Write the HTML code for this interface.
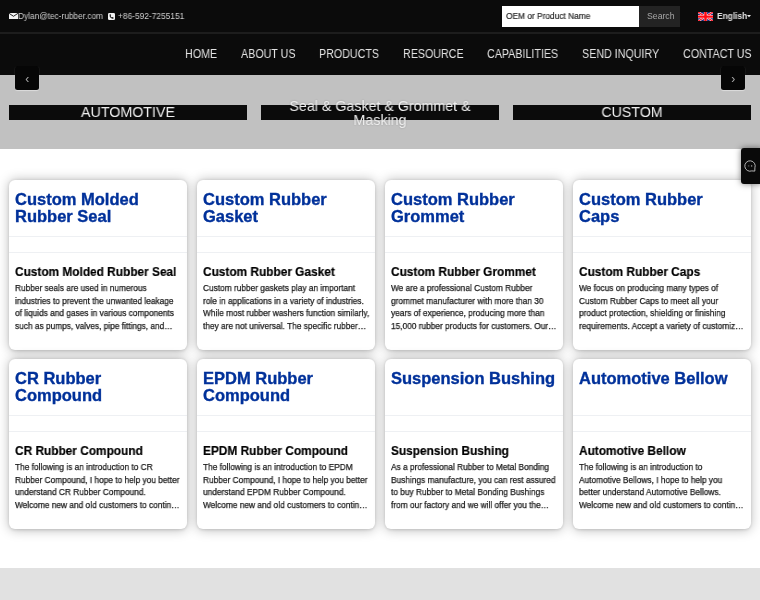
<!DOCTYPE html>
<html><head><meta charset="utf-8">
<style>
*{margin:0;padding:0;box-sizing:border-box}
html,body{width:760px;height:600px;overflow:hidden;background:#fff;font-family:"Liberation Sans",sans-serif}
.top{position:absolute;left:0;top:0;width:760px;height:32px;background:#0b0b0b}
.topline{position:absolute;left:0;top:32px;width:760px;height:2px;background:#1d1d1d}
.nav{position:absolute;left:0;top:34px;width:760px;height:41px;background:#0b0b0b}
.search{position:absolute;left:502px;top:6px;width:136.5px;height:20.5px;background:#fff}
.sbtn{position:absolute;left:638.5px;top:6px;width:41.5px;height:20.5px;background:#232323}
.tb{position:absolute;color:#d0d0d0;font-size:8.7px;white-space:nowrap;transform-origin:0 0}
.navi{position:absolute;top:46.6px;color:#e2e2e2;font-size:12.3px;white-space:nowrap;transform:scaleX(.87);transform-origin:0 0}
.banner{position:absolute;left:0;top:75px;width:760px;height:74px;background:#c1c1c1}
.arrow{position:absolute;top:66px;width:24.3px;height:24px;background:#060606;border-radius:2.5px;color:#aaa;font-size:12px;text-align:center;line-height:26px;box-shadow:0 1px 1px -.3px rgba(255,255,255,.45)}
.tab{position:absolute;top:105px;width:238px;height:15px;background:#0b0b0b}
.tabt{position:absolute;color:#eee;font-size:15px;white-space:nowrap;text-align:center;transform:scaleX(.949)}
.chat{position:absolute;left:741px;top:148px;width:22px;height:36px;background:#090909;border-radius:3px;box-shadow:0 0 6px rgba(0,0,0,.5);z-index:5}
.foot{position:absolute;left:0;top:568px;width:760px;height:32px;background:#e1e1e1}
.card{position:absolute;width:178px;height:170px;background:#fff;border-radius:6px;box-shadow:0 .5px 3px rgba(0,0,0,.12),0 .5px 12px rgba(0,0,0,.27);overflow:hidden}
.card .t{position:absolute;left:6px;top:10.5px;color:#00319a;font-weight:bold;font-size:16.5px;line-height:17px;-webkit-text-stroke:.35px #00319a}
.card .l1{position:absolute;left:0;top:56px;width:100%;height:1px;background:#eef0f3}
.card .l2{position:absolute;left:0;top:72px;width:100%;height:1px;background:#eef0f3}
.card .h{position:absolute;left:6px;top:83.5px;color:#000;font-weight:bold;font-size:13px;white-space:nowrap;-webkit-text-stroke:.2px #000;transform:scaleX(.912);transform-origin:0 0}
.card .d{position:absolute;left:6px;top:101.6px;white-space:nowrap;color:#111;font-size:9px;line-height:12.5px;-webkit-text-stroke:.25px #222;transform:scaleX(.924);transform-origin:0 0}
.tb,.navi,.tabt,.arrow,.t,.h,.d{will-change:transform}
.r2 .t,.r2 .h,.r2 .d{margin-top:.6px}
</style></head><body>
<div class="top"></div>
<div class="topline"></div>
<div class="nav"></div>
<svg style="position:absolute;left:8.5px;top:13px" width="9" height="6" viewBox="0 0 9 6"><rect x="0" y="0" width="9" height="6" fill="#f2f2f2"/><path d="M0 0.3 L4.5 3.3 L9 0.3" stroke="#0c0c0c" stroke-width="0.9" fill="none"/></svg>
<div class="tb" style="left:17.8px;top:10.5px;transform:scaleX(.955)">Dylan@tec-rubber.com</div>
<svg style="position:absolute;left:108px;top:12.6px" width="7" height="7" viewBox="0 0 7 7"><rect x="0" y="0" width="7" height="7" rx="1.3" fill="#f2f2f2"/><path d="M1.6 1.5 Q1.2 3.9 3.3 5.3 Q4.3 5.9 5.5 5.6 L5.5 4.6 L4.4 4.1 L3.9 4.6 Q2.6 3.8 2.6 2.7 L3.1 2.3 L2.6 1.3 Z" fill="#0c0c0c"/></svg>
<div class="tb" style="left:118.4px;top:10.5px;transform:scaleX(.963)">+86-592-7255151</div>
<div class="search"></div>
<div class="tb" style="left:505.7px;top:11px;color:#2a2a2a;-webkit-text-stroke:.2px #2a2a2a;transform:scaleX(.96)">OEM or Product Name</div>
<div class="sbtn"></div>
<div class="tb" style="left:646.8px;top:11px;color:#a8a8a8">Search</div>
<svg style="position:absolute;left:698px;top:12px" width="15" height="9.2" viewBox="0 0 60 38" preserveAspectRatio="none"><rect width="60" height="38" fill="#1a2a7a"/><path d="M0 0 L60 38 M60 0 L0 38" stroke="#fff" stroke-width="9"/><path d="M0 0 L60 38 M60 0 L0 38" stroke="#ff1020" stroke-width="5"/><path d="M30 0 V38 M0 19 H60" stroke="#fff" stroke-width="13"/><path d="M30 0 V38 M0 19 H60" stroke="#ff0a14" stroke-width="10"/></svg>
<div class="tb" style="left:716.7px;top:11px;color:#e0e0e0;font-weight:bold;transform:scaleX(.965)">English</div>
<svg style="position:absolute;left:747.2px;top:15px" width="4" height="3" viewBox="0 0 4 3"><path d="M0 0 H4 L2 2.2 Z" fill="#eee"/></svg>
<div class="navi" style="left:185px">HOME</div>
<div class="navi" style="left:241px">ABOUT US</div>
<div class="navi" style="left:319px">PRODUCTS</div>
<div class="navi" style="left:403px">RESOURCE</div>
<div class="navi" style="left:487px">CAPABILITIES</div>
<div class="navi" style="left:582px">SEND INQUIRY</div>
<div class="navi" style="left:683px">CONTACT US</div>
<div class="banner"></div>
<div class="arrow" style="left:15px">‹</div>
<div class="arrow" style="left:721px">›</div>
<div class="tab" style="left:9px"></div>
<div class="tab" style="left:261px"></div>
<div class="tab" style="left:513px"></div>
<div class="tabt" style="left:9px;top:103.2px;width:238px">AUTOMOTIVE</div>
<div class="tabt" style="left:261px;top:98.6px;width:238px;line-height:14.3px;text-shadow:0 0 2px rgba(0,0,0,.25)">Seal &amp; Gasket &amp; Grommet &amp;<br>Masking</div>
<div class="tabt" style="left:513px;top:103.2px;width:238px">CUSTOM</div>
<div class="chat"><svg style="position:absolute;left:2.4px;top:11px" width="14" height="14" viewBox="0 0 14 14"><path d="M11.9 8.8 A5.2 5.2 0 1 0 8.8 11.9 L11.8 12.1 Z" fill="none" stroke="#d0d0d0" stroke-width=".85" stroke-linejoin="round"/><rect x="4.9" y="6.6" width="1.5" height=".7" fill="#888"/><rect x="8.1" y="6.4" width="1.1" height="1.1" fill="#ccc"/></svg></div>
<div class="foot"></div>

<div class="card" style="left:9px;top:180px"><div class="t">Custom Molded<br>Rubber Seal</div><div class="l1"></div><div class="l2"></div><div class="h">Custom Molded Rubber Seal</div><div class="d">Rubber seals are used in numerous<br>industries to prevent the unwanted leakage<br>of liquids and gases in various components<br>such as pumps, valves, pipe fittings, and…</div></div>
<div class="card" style="left:197px;top:180px"><div class="t">Custom Rubber<br>Gasket</div><div class="l1"></div><div class="l2"></div><div class="h">Custom Rubber Gasket</div><div class="d">Custom rubber gaskets play an important<br>role in applications in a variety of industries.<br>While most rubber washers function similarly,<br>they are not universal. The specific rubber…</div></div>
<div class="card" style="left:385px;top:180px"><div class="t">Custom Rubber<br>Grommet</div><div class="l1"></div><div class="l2"></div><div class="h">Custom Rubber Grommet</div><div class="d">We are a professional Custom Rubber<br>grommet manufacturer with more than 30<br>years of experience, producing more than<br>15,000 rubber products for customers. Our…</div></div>
<div class="card" style="left:573px;top:180px"><div class="t">Custom Rubber<br>Caps</div><div class="l1"></div><div class="l2"></div><div class="h">Custom Rubber Caps</div><div class="d">We focus on producing many types of<br>Custom Rubber Caps to meet all your<br>product protection, shielding or finishing<br>requirements. Accept a variety of customiz…</div></div>

<div class="card r2" style="left:9px;top:359px"><div class="t">CR Rubber<br>Compound</div><div class="l1"></div><div class="l2"></div><div class="h">CR Rubber Compound</div><div class="d">The following is an introduction to CR<br>Rubber Compound, I hope to help you better<br>understand CR Rubber Compound.<br>Welcome new and old customers to contin…</div></div>
<div class="card r2" style="left:197px;top:359px"><div class="t">EPDM Rubber<br>Compound</div><div class="l1"></div><div class="l2"></div><div class="h">EPDM Rubber Compound</div><div class="d">The following is an introduction to EPDM<br>Rubber Compound, I hope to help you better<br>understand EPDM Rubber Compound.<br>Welcome new and old customers to contin…</div></div>
<div class="card r2" style="left:385px;top:359px"><div class="t">Suspension Bushing</div><div class="l1"></div><div class="l2"></div><div class="h">Suspension Bushing</div><div class="d">As a professional Rubber to Metal Bonding<br>Bushings manufacture, you can rest assured<br>to buy Rubber to Metal Bonding Bushings<br>from our factory and we will offer you the…</div></div>
<div class="card r2" style="left:573px;top:359px"><div class="t">Automotive Bellow</div><div class="l1"></div><div class="l2"></div><div class="h">Automotive Bellow</div><div class="d">The following is an introduction to<br>Automotive Bellows, I hope to help you<br>better understand Automotive Bellows.<br>Welcome new and old customers to contin…</div></div>
</body></html>
